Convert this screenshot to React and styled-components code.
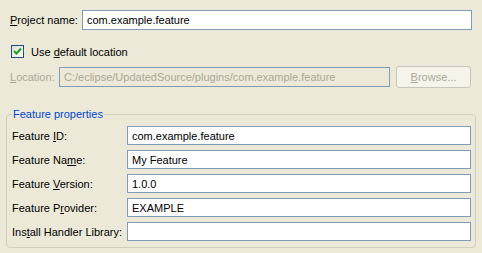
import React from 'react';
import styled, { createGlobalStyle } from 'styled-components';

const Global = createGlobalStyle`
  html, body {
    margin: 0;
    padding: 0;
    background: #ECE9D8;
  }
  body {
    font-family: "Liberation Sans", Arial, sans-serif;
    font-size: 11px;
    color: #000;
  }
`;

const Page = styled.div`
  width: 482px;
  height: 253px;
  box-sizing: border-box;
  padding: 10px 10px 0 10px;
  background: #ECE9D8;
  overflow: hidden;
`;

const Row = styled.div`
  display: flex;
  align-items: center;
  margin-top: ${p => p.$top || 0}px;
`;

const Label = styled.label`
  width: ${p => p.$width}px;
  flex: none;
  color: ${p => (p.$disabled ? '#ACA899' : '#000')};
  white-space: nowrap;
`;

const TextBox = styled.div`
  flex: 1;
  height: ${p => p.$height || 19}px;
  box-sizing: border-box;
  border: 1px solid #7F9DB9;
  background: ${p => (p.$disabled ? '#ECE9D8' : '#fff')};
  color: ${p => (p.$disabled ? '#ACA899' : '#000')};
  padding: 0 4px;
  display: flex;
  align-items: center;
  white-space: nowrap;
  overflow: hidden;
`;

const Button = styled.div`
  flex: none;
  width: 75px;
  height: 22px;
  box-sizing: border-box;
  margin-left: 6px;
  border: 1px solid #C9C7BA;
  border-radius: 3px;
  background: #F5F4EA;
  color: #ACA899;
  display: flex;
  align-items: center;
  justify-content: center;
`;

const Check = styled.span`
  width: 13px;
  height: 13px;
  box-sizing: border-box;
  margin-left: 1px;
  margin-right: 7px;
  border: 1px solid #1C5180;
  background: linear-gradient(135deg, #DCDCD7 0%, #F5F5F1 70%, #fff 100%);
  display: flex;
  align-items: center;
  justify-content: center;
  flex: none;
`;

const Group = styled.fieldset`
  margin: 20px 0 0 -4px;
  width: 470px;
  box-sizing: border-box;
  border: 1px solid #D0D0BF;
  border-radius: 4px;
  padding: 0 4px 6px 5px;
`;

const Legend = styled.legend`
  color: #0046D5;
  padding: 0 1px;
  line-height: 13px;
`;

const Field = styled(Row)`
  margin-top: 5px;
`;

const fields = [
  { pre: 'Feature ', key: 'I', post: 'D:', value: 'com.example.feature' },
  { pre: 'Feature Na', key: 'm', post: 'e:', value: 'My Feature' },
  { pre: 'Feature ', key: 'V', post: 'ersion:', value: '1.0.0' },
  { pre: 'Feature P', key: 'r', post: 'ovider:', value: 'EXAMPLE' },
  { pre: 'Ins', key: 't', post: 'all Handler Library:', value: '' },
];

export default function App() {
  return (
    <Page>
      <Global />
      <Row>
        <Label $width={72}><u>P</u>roject name:</Label>
        <TextBox $height={20}>com.example.feature</TextBox>
      </Row>
      <Row $top={15}>
        <Check>
          <svg width="9" height="9" viewBox="0 0 9 9">
            <path d="M1 4 L3.5 6.5 L8 1.5" fill="none" stroke="#21A121" strokeWidth="2" />
          </svg>
        </Check>
        <span>Use <u>d</u>efault location</span>
      </Row>
      <Row $top={8} style={{ marginRight: 1 }}>
        <Label $width={49} $disabled><u>L</u>ocation:</Label>
        <TextBox $height={20} $disabled>C:/eclipse/UpdatedSource/plugins/com.example.feature</TextBox>
        <Button><span><u>B</u>rowse...</span></Button>
      </Row>
      <Group>
        <Legend>Feature properties</Legend>
        {fields.map((f, i) => (
          <Field key={i}>
            <Label $width={115}>{f.pre}<u>{f.key}</u>{f.post}</Label>
            <TextBox>{f.value}</TextBox>
          </Field>
        ))}
      </Group>
    </Page>
  );
}
